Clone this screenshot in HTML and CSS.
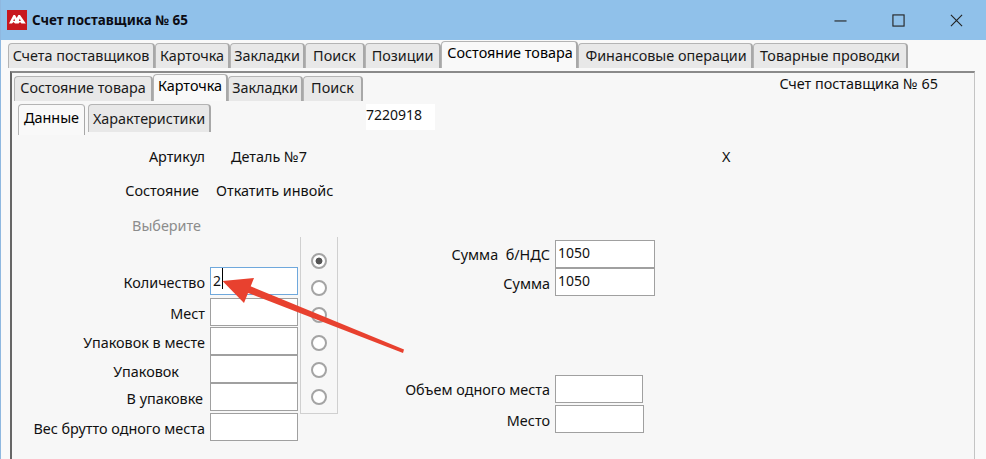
FILE: index.html
```html
<!DOCTYPE html>
<html lang="ru">
<head>
<meta charset="utf-8">
<title>Счет поставщика № 65</title>
<link rel="stylesheet" href="styles.css">
</head>
<body>
<div class="window">
  <header class="titlebar">
    <svg class="app-icon" viewBox="0 0 20 20" aria-hidden="true">
      <rect width="20" height="20" fill="#c8171e"/>
      <path fill-rule="evenodd" d="M2 13.5 L6.5 5 L8 5 L9.7 8 L11.4 5 L13 5 L18.8 13.5 L14.5 13.5 L13 12 L11.5 13.5 L8 13.5 L6.5 12 L5 13.5 Z M6.2 11 L8 11 L7.2 8.5 Z M11.8 11 L13.8 11 L12.8 8.5 Z" fill="#fff"/>
    </svg>
    <span class="title">Счет поставщика № 65</span>
    <div class="win-controls">
      <svg class="win-btn" viewBox="0 0 14 14" aria-hidden="true"><path d="M0.5 7.5H13.5" stroke="#222" stroke-width="1.2" fill="none"/></svg>
      <svg class="win-btn" viewBox="0 0 14 14" aria-hidden="true"><rect x="1" y="1" width="12" height="12" stroke="#222" stroke-width="1.2" fill="none"/></svg>
      <svg class="win-btn" viewBox="0 0 14 14" aria-hidden="true"><path d="M1 1L13 13M13 1L1 13" stroke="#222" stroke-width="1.2" fill="none"/></svg>
    </div>
  </header>

  <nav class="tabs tabs-main">
    <div class="tab">Счета поставщиков</div>
    <div class="tab">Карточка</div>
    <div class="tab">Закладки</div>
    <div class="tab">Поиск</div>
    <div class="tab">Позиции</div>
    <div class="tab active">Состояние товара</div>
    <div class="tab">Финансовые операции</div>
    <div class="tab">Товарные проводки</div>
  </nav>

  <main class="panel">
    <div class="sub-head">
      <nav class="tabs tabs-sub">
        <div class="tab">Состояние товара</div>
        <div class="tab active">Карточка</div>
        <div class="tab">Закладки</div>
        <div class="tab">Поиск</div>
      </nav>
      <span class="doc-name">Счет поставщика № 65</span>
    </div>

    <div class="third-head">
      <nav class="tabs tabs-third">
        <div class="tab active">Данные</div>
        <div class="tab">Характеристики</div>
      </nav>
      <div class="code-box">7220918</div>
    </div>

    <section class="info">
      <div class="info-label">Артикул</div><div class="info-value v-article">Деталь №7</div><div>X</div>
      <div class="info-label l-state">Состояние</div><div class="info-value v-state">Откатить инвойс</div><div></div>
      <div class="info-label l-choose">Выберите</div><div></div><div></div>
    </section>

    <section class="form">
      <div class="qty-col">
        <div class="row"><label class="lbl">Количество</label><div class="field focused"><span>2</span><i class="caret"></i></div></div>
        <div class="row"><label class="lbl">Мест</label><div class="field"></div></div>
        <div class="row"><label class="lbl">Упаковок в месте</label><div class="field"></div></div>
        <div class="row"><label class="lbl l-pack">Упаковок</label><div class="field"></div></div>
        <div class="row"><label class="lbl l-inpack">В упаковке</label><div class="field"></div></div>
        <div class="row"><label class="lbl">Вес брутто одного места</label><div class="field"></div></div>
      </div>

      <div class="radios">
        <span class="radio on"></span>
        <span class="radio"></span>
        <span class="radio"></span>
        <span class="radio"></span>
        <span class="radio"></span>
        <span class="radio"></span>
      </div>

      <div class="sum-col">
        <div class="srow"><label class="lbl">Сумма&nbsp; б/НДС</label><div class="field f-sum">1050</div></div>
        <div class="srow"><label class="lbl">Сумма</label><div class="field f-sum">1050</div></div>
        <div class="srow"><label class="lbl">Объем одного места</label><div class="field f-vol"></div></div>
        <div class="srow"><label class="lbl">Место</label><div class="field f-place"></div></div>
      </div>
    </section>
  </main>

  <svg class="arrow" viewBox="0 0 986 459" aria-hidden="true">
    <path d="M404 349.5 L403 353 L243 291 L245 284 Z" fill="#e8412f"/>
    <path d="M222.5 281 L254 278 L244 303 Z" fill="#e8412f"/>
  </svg>
</div>
</body>
</html>
```

FILE: styles.css
```css
* { box-sizing: border-box; }
html, body { margin: 0; padding: 0; }
body {
  width: 986px;
  height: 459px;
  overflow: hidden;
  background: #f9f9f9;
  font-family: "Noto Sans", "Open Sans", sans-serif;
  font-size: 14.4px;
  line-height: 20px;
  color: #111;
}
.window {
  position: relative;
  height: 459px;
  display: flex;
  flex-direction: column;
  border-left: 1px solid #8fb8e0;
  overflow: hidden;
}

/* title bar */
.titlebar {
  flex: none;
  height: 40px;
  margin-left: -1px;
  background: #90c1ea;
  display: flex;
  align-items: center;
  padding-left: 7px;
}
.app-icon { width: 20px; height: 20px; flex: none; }
.title {
  margin-left: 5px;
  font-weight: 700;
  font-size: 13.45px;
  color: #0c0c14;
}
.win-controls {
  margin-left: auto;
  display: flex;
  gap: 45px;
  padding-right: 23px;
}
.win-btn { width: 13px; height: 13px; display: block; }

/* tabs */
.tabs { display: flex; align-items: flex-end; }
.tab {
  flex: none;
  height: 25px;
  background: #e8e8e8;
  border: 1px solid #b4b4b4;
  border-bottom: 0;
  border-right: 2px solid #a8a8a8;
  border-radius: 4px 4px 0 0;
  text-align: center;
  line-height: 23px;
  white-space: nowrap;
  color: #1a1a1a;
  overflow: hidden;
}
.tab.active {
  background: #f9f9f9;
  height: 27px;
  color: #000;
  line-height: 22px;
}

.tabs-main { flex: none; height: 27px; margin: 1px 0 0 7px; }
.tabs-main .tab:nth-child(1) { width: 147px; }
.tabs-main .tab:nth-child(2) { width: 75px; }
.tabs-main .tab:nth-child(3) { width: 75px; }
.tabs-main .tab:nth-child(4) { width: 60px; }
.tabs-main .tab:nth-child(5) { width: 76px; }
.tabs-main .tab:nth-child(6) { width: 137px; padding-left: 2px; }
.tabs-main .tab:nth-child(7) { width: 175px; padding-left: 2px; }
.tabs-main .tab:nth-child(8) { width: 155px; }

/* outer panel */
.panel {
  flex: 1;
  margin: 3px 0 0 9px;
  width: 965px;
  background: #f7f7f7;
  border-top: 2px solid #8a8a8a;
  border-left: 2px solid #666;
  border-right: 1px solid #c4c4c4;
}

.sub-head {
  display: flex;
  justify-content: space-between;
  height: 27px;
  margin-top: 1px;
  padding: 0 36px 0 2px;
}
.tabs-sub { height: 27px; }
.tabs-sub .tab { line-height: 22px; }
.tabs-sub .tab.active { line-height: 22px; }
.tabs-sub .tab:nth-child(1) { width: 139px; }
.tabs-sub .tab:nth-child(2) { width: 75px; }
.tabs-sub .tab:nth-child(3) { width: 75px; }
.tabs-sub .tab:nth-child(4) { width: 60px; }
.doc-name { line-height: 20px; }

.third-head {
  display: flex;
  height: 31px;
  margin-top: 3px;
  padding-left: 6px;
}
.tabs-third { align-items: flex-start; gap: 3px; }
.tabs-third .tab { height: 28px; width: 123px; line-height: 27px; }
.tabs-third .tab.active { height: 31px; width: 67px; line-height: 26px; border-right-width: 1px; }
.code-box {
  margin-left: 155px;
  width: 69px;
  height: 26px;
  background: #fff;
  font-size: 14px;
  line-height: 22px;
}

/* info rows */
.info {
  display: grid;
  grid-template-columns: 193px 517px auto;
  grid-auto-rows: 24px;
  row-gap: 10px;
  margin-top: 10px;
  line-height: 24px;
}
.info-label { text-align: right; }
.l-state { padding-right: 6px; }
.l-choose { padding-right: 4px; color: #8c8c8c; line-height: 26px; }
.v-article { padding-left: 26px; }
.v-state { padding-left: 11px; }

/* form */
.form { display: flex; align-items: flex-start; }
.lbl { white-space: nowrap; }
.field {
  flex: none;
  height: 28px;
  background: #fff;
  border: 1px solid #a0a0a0;
  font-size: 14px;
  line-height: 24px;
  padding-left: 2px;
}
.focused { border-color: #6fa8dc; display: flex; align-items: flex-start; }
.focused span { line-height: 26px; }
.caret { display: block; width: 1px; height: 21px; margin: 0 0 0 1px; background: #000; }

.qty-col { flex: none; width: 286px; padding-top: 30px; }
.row {
  display: flex;
  justify-content: flex-end;
  gap: 5px;
  height: 28px;
}
.row .field { width: 88px; }
.row .lbl { line-height: 32px; }
.row .l-pack { padding-right: 26px; line-height: 34px; }
.row .l-inpack { padding-right: 2px; }
.row:nth-child(2) { margin-top: 3px; }
.row:nth-child(3) { margin-top: 1px; }
.row:nth-child(6) { margin-top: 2px; }

.radios {
  flex: none;
  width: 38px;
  height: 177px;
  margin-left: 2px;
  padding-top: 16px;
  display: flex;
  flex-direction: column;
  align-items: center;
  gap: 11.2px;
  border: 1px solid #d0d0d0;
  border-top: 0;
}
.radio {
  flex: none;
  width: 16px;
  height: 16px;
  border-radius: 50%;
  background: #fff;
  border: 2px solid #a4a4a4;
  display: block;
}
.radio.on { background: radial-gradient(circle, #555 0 3px, #fff 3.8px); }

.sum-col { flex: none; width: 317px; padding-top: 3px; }
.srow {
  display: grid;
  grid-template-columns: 212px auto;
  column-gap: 5px;
  justify-content: start;
  height: 28px;
}
.srow .lbl { text-align: right; line-height: 30px; }
.srow:nth-child(2) .lbl, .srow:nth-child(4) .lbl { line-height: 32px; }
.srow:nth-child(3) { margin-top: 79px; }
.srow:nth-child(4) { margin-top: 2px; }
.f-sum { width: 100px; }
.f-vol { width: 88px; }
.f-place { width: 89px; }

/* annotation over the page */
.arrow {
  position: absolute;
  left: -1px;
  top: 0;
  width: 986px;
  height: 459px;
  pointer-events: none;
}
```
